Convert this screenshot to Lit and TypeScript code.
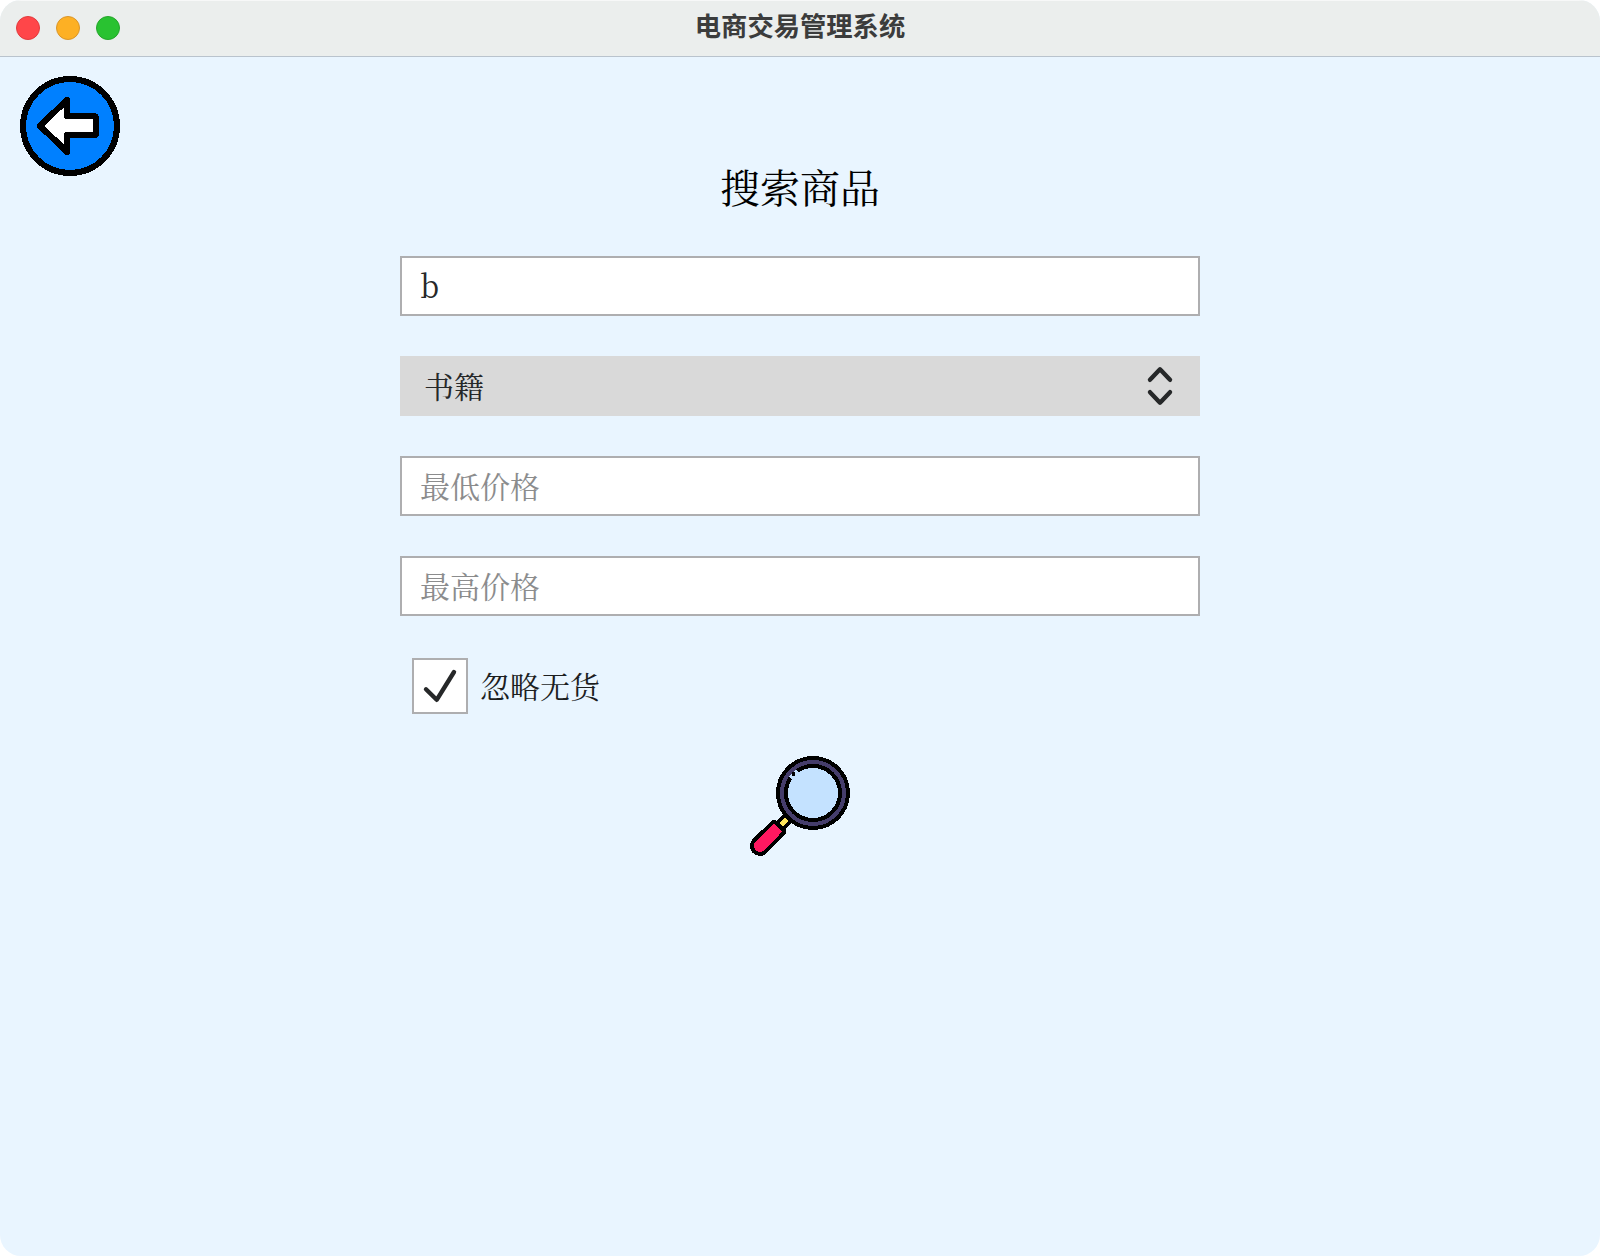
import { LitElement, html, css } from "lit";
import { customElement, property } from "lit/decorators.js";

@customElement("text-field")
class TextField extends LitElement {
  @property() value = "";
  @property() hint = "";

  static styles = css`
    :host { display: block; }
    .field {
      box-sizing: border-box;
      display: flex;
      align-items: center;
      height: 60px;
      padding: 0 18px;
      border: 2px solid #aeaeb0;
      background: #fff;
      color: #262829;
      font-size: 30px;
      line-height: 1;
    }
    .value { display: block; padding-bottom: 4px; transform: scaleY(1.05); }
    .hint { color: #8b8c8d; padding-bottom: 2px; }
  `;

  render() {
    return html`<div class="field">
      ${this.value ? html`<span class="value">${this.value}</span>` : html`<span class="hint">${this.hint}</span>`}
    </div>`;
  }
}

@customElement("app-root")
class AppRoot extends LitElement {
  static styles = css`
    :host { display: block; background: #fff; }
    .window {
      box-sizing: border-box;
      display: flex;
      flex-direction: column;
      height: 1256px;
      border-radius: 21px;
      overflow: hidden;
      background: #e9f5ff;
      font-family: "Noto Serif CJK SC", "Noto Serif SC", "Source Han Serif SC", "Noto Sans CJK SC", serif;
      font-weight: 400;
    }
    .bar {
      box-sizing: border-box;
      display: grid;
      grid-template-columns: 1fr auto 1fr;
      align-items: center;
      height: 57px;
      padding: 0 16px 2px;
      border-top: 1px solid #f7f8f8;
      border-bottom: 1px solid #b9c3cd;
      background: #ebeeed;
    }
    .lights { display: flex; gap: 16px; }
    .light { box-sizing: border-box; width: 24px; height: 24px; border-radius: 50%; border: 1px solid; }
    .close { background: #ff4649; border-color: #e13b3d; }
    .min { background: #fdb024; border-color: #d9952a; }
    .max { background: #29c231; border-color: #25a52b; }
    .title {
      font: 700 26.3px/1 "Noto Sans CJK SC", sans-serif;
      color: #3b3c3c;
      padding-bottom: 4px;
    }
    .body { display: flex; align-items: flex-start; padding: 19px 20px; }
    svg { display: block; }
    .side { width: 380px; }
    .form { width: 800px; display: flex; flex-direction: column; gap: 40px; padding-top: 90px; }
    .heading { margin: 0; font-size: 40px; line-height: 40px; font-weight: 400; text-align: center; color: #000; padding-bottom: 10px; }
    .select {
      box-sizing: border-box;
      height: 60px;
      display: flex;
      justify-content: space-between;
      align-items: center;
      padding: 0 25px 0 24px;
      background: #d9d9d9;
      color: #262829;
      font-size: 30px;
      line-height: 1;
    }
    .label { padding-bottom: 2px; }
    .check { display: flex; align-items: center; gap: 12px; height: 60px; padding-left: 12px; font-size: 30px; line-height: 1; color: #1c1e1f; }
    .box { box-sizing: border-box; width: 56px; height: 56px; border: 2px solid #aeaeb0; background: #fff; }
    .search { align-self: center; }
  `;

  render() {
    return html`
      <div class="window">
        <div class="bar">
          <div class="lights">
            <span class="light close"></span><span class="light min"></span><span class="light max"></span>
          </div>
          <div class="title">电商交易管理系统</div>
        </div>
        <div class="body">
          <div class="side">
            <svg width="100" height="100" viewBox="0 0 100 100" shape-rendering="crispEdges">
              <circle cx="50" cy="50" r="47" fill="#0080ff" stroke="#000" stroke-width="6" />
              <path d="M20 49.8 47 24V40.3H73.5Q76 40.3 76 42.8V56.8Q76 59.3 73.5 59.3H47V76Z" fill="#fff" stroke="#000" stroke-width="6.2" stroke-linejoin="round" />
            </svg>
          </div>
          <div class="form">
            <h1 class="heading">搜索商品</h1>
            <text-field value="b"></text-field>
            <div class="select">
              <span class="label">书籍</span>
              <svg width="30" height="44" viewBox="1145 364 30 44" fill="none" stroke="#262829" stroke-width="4.4" stroke-linecap="round" stroke-linejoin="round">
                <path d="M1150 379.8 1160 369.3 1170 379.8M1150 392.2 1160 402.7 1170 392.2" />
              </svg>
            </div>
            <text-field hint="最低价格"></text-field>
            <text-field hint="最高价格"></text-field>
            <div class="check">
              <div class="box">
                <svg width="52" height="52" viewBox="414 660 52 52" fill="none" stroke="#262829" stroke-width="4.4" stroke-linecap="round" stroke-linejoin="round">
                  <path d="M426 689.3 436.7 699.8 454 672" />
                </svg>
              </div>
              <span class="label">忽略无货</span>
            </div>
            <svg class="search" width="100" height="100" viewBox="0 0 100 100" shape-rendering="crispEdges">
              <path d="M28 72 42 58" stroke="#000" stroke-width="11.5" />
              <path d="M31.2 69.2 37.4 63" stroke="#ffe65c" stroke-width="5" />
              <path d="M4.3 84.2 22.6 66.6Q24.3 65 26 66.6L33.6 74.2Q35 75.6 33.6 77.2L15.6 95.6A8 8 0 0 1 4.3 84.2Z" fill="#ff1860" stroke="#000" stroke-width="4" />
              <circle cx="63" cy="37" r="31" fill="none" stroke="#453d6b" stroke-width="6" />
              <circle cx="63" cy="37" r="35" fill="none" stroke="#000" stroke-width="4" />
              <circle cx="63" cy="37" r="27" fill="#c4e2ff" stroke="#000" stroke-width="4" />
              <path d="M40.6 22 47.6 15" stroke="#c4e2ff" stroke-width="4" />
              <circle cx="43.5" cy="18" r="1.9" fill="#000" />
            </svg>
          </div>
        </div>
      </div>
    `;
  }
}
